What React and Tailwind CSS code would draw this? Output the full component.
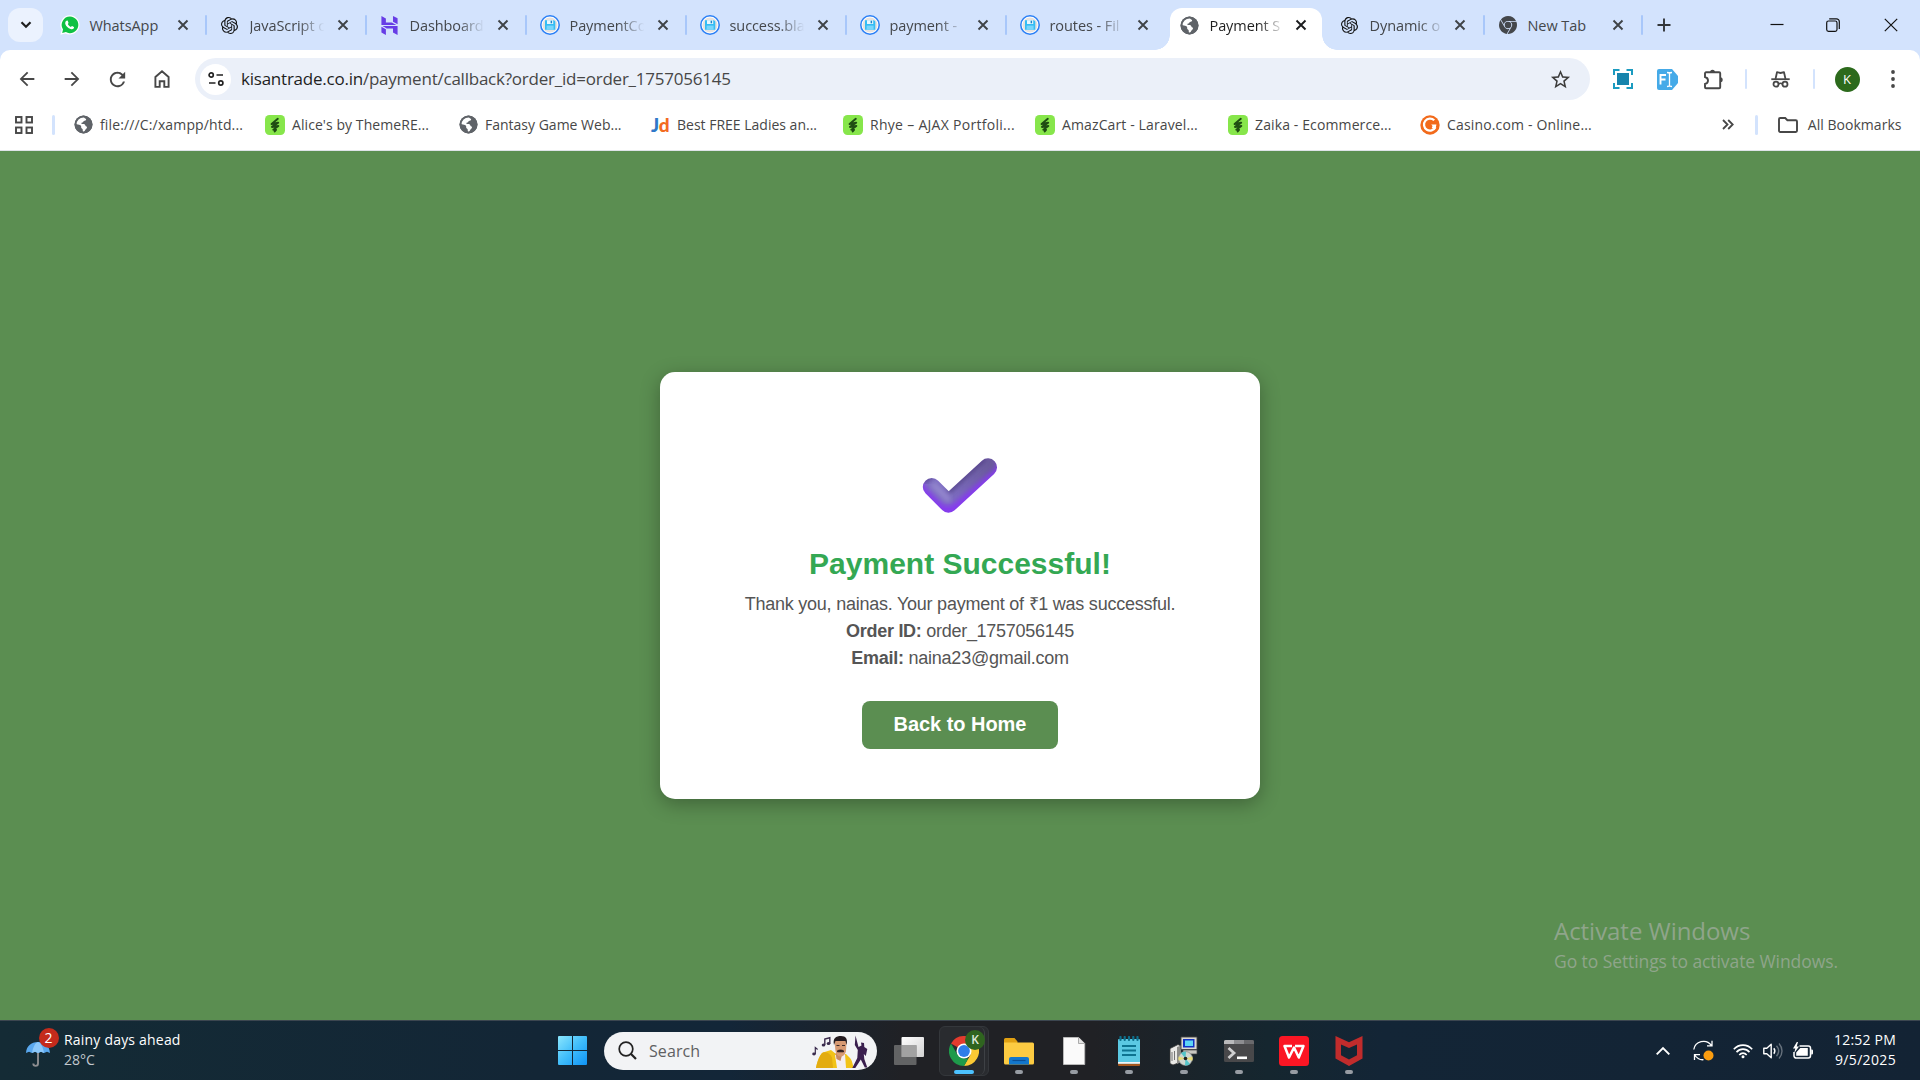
import { SiOpenai, SiHostinger, SiGooglechrome } from "react-icons/si";
import { MdArrowBack, MdArrowForward, MdRefresh, MdStarBorder } from "react-icons/md";

const SEGOE = "font-['Open_Sans','Noto_Sans',sans-serif]";

function WhatsAppIcon() {
  return (
    <svg width="20" height="20" viewBox="0 0 20 20">
      <path d="M10 .3A9.6 9.6 0 0 0 1.7 14.8L.4 19.7l5-1.3A9.6 9.6 0 1 0 10 .3z" fill="#fff" />
      <path d="M10 1.6a8.3 8.3 0 0 0-7 12.8L2.2 18l3.700-.9A8.3 8.3 0 1 0 10 1.6z" fill="#0fc143" />
      <path d="M7.1 5.6c.3 0 .5 0 .7.5l.7 1.6c.1.3-.2.8-.7 1.3.7 1.4 1.7 2.3 3.2 3 .4-.5.8-1.1 1.1-1l1.8.9c.3.2.1 1.2-.3 1.7-.7.8-1.8.9-3 .5-2.600-.9-4.500-2.700-5.300-5-.3-1.200.2-3.500 1.800-3.500z" fill="#fff" />
    </svg>
  );
}

function DiskIcon() {
  return (
    <svg width="20" height="20" viewBox="0 0 20 20">
      <circle cx="10" cy="10" r="9.200" fill="#fff" stroke="#2a7ff5" strokeWidth="1.500" />
      <circle cx="10" cy="10" r="7.600" fill="#e6e2de" />
      <path d="M5 5.200h9l1.300 1.200v8.400H5z" fill="#35bdf4" />
      <rect x="7" y="5.200" width="6.200" height="3.800" fill="#e8f7ff" />
      <rect x="10.600" y="5.700" width="1.500" height="2.600" fill="#1e86c9" />
      <rect x="6.600" y="10.600" width="7" height="4.200" fill="#7bd6fa" />
    </svg>
  );
}

function GlobeIcon() {
  return (
    <svg width="19" height="19" viewBox="0 0 19 19">
      <circle cx="9.500" cy="9.500" r="9" fill="#5f6368" />
      <path d="M9.300 2c1.800.2 1 1.600 2.500 1.800.9.600-.1 1.800-1.100 1.900-1.300.1-1.300 1.600-2.300 1.700-1.500.1-1.400 1.500-.2 1.600 1.800-.1 3 .2 3.300 1.700.3.900 1.600.5 1.600 1.400-.3 1.800-1.800 2.400-2.400 3.800-.3.900-1.200 1.300-1.700 1.100-.5-.700.1-2-.5-2.900-.9-.800-1.600-1.300-1.300-2.400.2-1.400-1.500-2.200-3.300-2.300L2 9c.2-4 3.300-7 7.300-7z" fill="#fff" />
      <circle cx="9.500" cy="9.500" r="8" fill="none" stroke="#5f6368" strokeWidth="2" />
    </svg>
  );
}

function EnvatoIcon() {
  return (
    <svg width="20" height="20" viewBox="0 0 20 20">
      <rect width="20" height="20" rx="4.500" fill="#87e64b" />
      <path d="M12.800 3.800 6.600 9l6.600-1.300-6.200 4.200 6.300-.9-5 3.700 2.700.1-1.300 1.700" fill="none" stroke="#1f4d13" strokeWidth="2" strokeLinejoin="round" strokeLinecap="round" />
    </svg>
  );
}

function CasinoIcon() {
  return (
    <svg width="20" height="20" viewBox="0 0 20 20">
      <circle cx="10" cy="10" r="9.700" fill="#f26a1b" />
      <path d="M14.200 5.300a6 6 0 1 0 1.200 6.900" fill="none" stroke="#fff" strokeWidth="2.300" />
      <path d="M16.400 9.600h-5.200l1.300 1.300-.8 2.300h4z" fill="#fff" />
    </svg>
  );
}

function JdIcon() {
  return (
    <span className="flex w-[19px] justify-center font-['Lato','Open_Sans',sans-serif] text-[19px] leading-5 font-black tracking-[-0.5px]">
      <span className="text-[#2f79c9]">J</span>
      <span className="text-[#f36b21]">d</span>
    </span>
  );
}

function CloseX({ dark }) {
  return (
    <svg width="12" height="12" viewBox="0 0 12 12" className={dark ? "text-[#1b1c1e]" : "text-[#3f4347]"}>
      <path d="M1.500 1.500l9 9M10.500 1.500l-9 9" stroke="currentColor" strokeWidth="1.900" />
    </svg>
  );
}

function Divider({ className }) {
  return <div className={"h-5 w-[2.500px] shrink-0 rounded-full " + className} />;
}

const tabs = [
  { icon: <WhatsAppIcon />, title: "WhatsApp" },
  { icon: <SiOpenai size={17} color="#111" />, title: "JavaScript c", fade: true },
  { icon: <SiHostinger size={19} color="#673de6" />, title: "Dashboard", fade: true },
  { icon: <DiskIcon />, title: "PaymentCo", fade: true },
  { icon: <DiskIcon />, title: "success.bla", fade: true },
  { icon: <DiskIcon />, title: "payment -", fade: true },
  { icon: <DiskIcon />, title: "routes - Fil", fade: true, last: true },
  { icon: <GlobeIcon />, title: "Payment S", fade: true, active: true },
  { icon: <SiOpenai size={17} color="#111" />, title: "Dynamic o", fade: true, narrow: true },
  { icon: <SiGooglechrome size={18} color="#44474b" />, title: "New Tab", narrow: true },
];

function Tab({ icon, title, fade, active, last, narrow }) {
  return (
    <div className={"relative flex h-[50px] shrink-0 items-center " + (narrow ? "w-[158px]" : "w-40")}>
      {active && (
        <>
          <div className="absolute top-2 right-[5px] bottom-0 left-[3px] rounded-t-xl bg-white" />
          <div className="absolute bottom-0 -left-[12px] h-[15px] w-[15px] bg-[radial-gradient(circle_at_0_0,#d3e3fd_14.500px,#fff_15px)]" />
          <div className="absolute -right-[10px] bottom-0 h-[15px] w-[15px] bg-[radial-gradient(circle_at_100%_0,#d3e3fd_14.500px,#fff_15px)]" />
        </>
      )}
      <div className="relative ml-[12.500px] flex w-5 justify-center">{icon}</div>
      <div
        className={
          "relative ml-2.5 w-[76px] pt-px text-[14.500px] tracking-[-0.080px] whitespace-nowrap " +
          (active ? "text-[#1f1f1f] " : "text-[#44474b] ") +
          (fade ? "[mask-image:linear-gradient(to_right,#000_64%,transparent_98%)]" : "")
        }
      >
        {title}
      </div>
      <div className={"relative " + (narrow ? "ml-[8.500px]" : active ? "ml-[9.500px]" : "ml-[11px]")}>
        <CloseX dark={active} />
      </div>
      {!active && !last && <Divider className="ml-auto bg-[#a8c7fa]" />}
    </div>
  );
}

function TabStrip() {
  return (
    <div className="flex h-[50px] items-center bg-[#d3e3fd]">
      <div className="mr-1 ml-2 flex h-[34px] w-[35px] shrink-0 items-center justify-center rounded-xl bg-[#ebf2fe]">
        <svg width="12" height="8" viewBox="0 0 12 8">
          <path d="M1.500 1.200 6 5.700l4.500-4.500" fill="none" stroke="#1f1f1f" strokeWidth="2.200" />
        </svg>
      </div>
      {tabs.map((t) => (
        <Tab key={t.title} {...t} />
      ))}
      <svg width="14" height="14" viewBox="0 0 14 14" className="ml-[14px]">
        <path d="M7 .5v13M.5 7h13" stroke="#33363a" strokeWidth="1.900" />
      </svg>
      <div className="mr-[22px] ml-auto flex items-center">
        <svg width="14" height="14" viewBox="0 0 14 14" className="mr-[42px]">
          <path d="M.5 6.500h13" stroke="#111" strokeWidth="1.200" />
        </svg>
        <svg width="14" height="14" viewBox="0 0 14 14" className="mr-[44px]">
          <rect x=".7" y="3" width="10.300" height="10.300" rx="1.800" fill="none" stroke="#111" strokeWidth="1.200" />
          <path d="M3.200.8h7.300a2.800 2.800 0 0 1 2.800 2.800V11" fill="none" stroke="#111" strokeWidth="1.200" />
        </svg>
        <svg width="14" height="14" viewBox="0 0 14 14">
          <path d="M.8.8l12.400 12.400M13.200.8.8 13.200" stroke="#111" strokeWidth="1.200" />
        </svg>
      </div>
    </div>
  );
}

function Toolbar() {
  return (
    <div className="bg-[#d3e3fd]">
      <div className="flex h-[50px] items-center rounded-t-[10px] bg-white pt-2 text-[#474747]">
        <MdArrowBack size={22} className="ml-4" />
        <MdArrowForward size={22} className="ml-[23px]" />
        <MdRefresh size={23} className="ml-[23px]" />
        <svg width="16" height="18" viewBox="0 0 16 18" className="ml-[25px]">
          <path d="M1.400 7v9.900h4.300v-5.700h4.600v5.700h4.300V7L8 1.300z" fill="none" stroke="#474747" strokeWidth="1.900" />
        </svg>
        <div className="ml-[25px] flex h-[42px] w-[1395px] items-center rounded-full bg-[#ebf0f9]">
          <div className="ml-[5px] flex h-[31px] w-[31px] items-center justify-center rounded-full bg-white">
            <svg width="16" height="16" viewBox="0 0 16 16" fill="none" stroke="#222" strokeWidth="1.700">
              <circle cx="3.200" cy="4" r="2.100" />
              <path d="M8.500 4H15M1 12h6.500" />
              <circle cx="12.800" cy="12" r="2.100" />
            </svg>
          </div>
          <div className="ml-[10px] text-[17px] tracking-[-0.230px] text-[#474747]">
            <span className="text-[#1f1f1f]">kisantrade.co.in</span>/payment/callback?order_id=order_1757056145
          </div>
          <MdStarBorder size={23} className="mr-[18px] ml-auto text-[#3c3c3c]" />
        </div>
        <svg width="20" height="20" viewBox="0 0 20 20" className="ml-[22.500px]">
          <path d="M1 6V1h5.500M13.500 1H19v5M19 14v5h-5.500M6.500 19H1v-5" fill="none" stroke="#1b9bc0" strokeWidth="2" />
          <rect x="4" y="4" width="12" height="12" fill="#1684ad" />
        </svg>
        <svg width="21" height="21" viewBox="0 0 21 21" className="ml-[24.500px]">
          <path d="M2 0h13l6 7v7l-6 7H2a2 2 0 0 1-2-2V2a2 2 0 0 1 2-2z" fill="#45aae8" />
          <path d="M3.500 15.500V6H9M3.500 10.500h5" fill="none" stroke="#fff" strokeWidth="1.900" />
          <path d="M10 3.500c1.500 0 2.300.4 2.500 1 .2-.6 1-1 2.500-1M10 17.500c1.500 0 2.300-.4 2.500-1 .2.600 1 1 2.500 1M12.500 4.500v12" fill="none" stroke="#fff" strokeWidth="1.300" />
        </svg>
        <svg width="21" height="21" viewBox="0 0 21 21" className="ml-[25px]">
          <path d="M2 4.300a1 1 0 0 1 1-1h13.200a1 1 0 0 1 1 1v14a1 1 0 0 1-1 1H3a1 1 0 0 1-1-1V15c4-.8 4-6 0-7z" fill="none" stroke="#474747" strokeWidth="1.900" />
          <path d="M7 3.300a2.500 2.500 0 0 1 5 0zM17.200 8.300a2.500 2.500 0 0 1 0 5z" fill="#474747" />
        </svg>
        <Divider className="ml-[20.500px] bg-[#d3e3fd]" />
        <svg width="19" height="18" viewBox="0 0 19 18" className="ml-[24px]" fill="none" stroke="#474747" strokeWidth="1.800">
          <path d="M.3 9.200h18.400" />
          <path d="M4.500 9 6 2.200 9.500 3l3.500-.8L14.500 9" strokeLinejoin="round" />
          <circle cx="5" cy="14.200" r="2.500" />
          <circle cx="14" cy="14.200" r="2.500" />
          <path d="M7.500 14c1-.9 3-.9 4 0" />
        </svg>
        <Divider className="ml-[22.500px] bg-[#d3e3fd]" />
        <div className="ml-[19.500px] flex h-[25px] w-[25px] items-center justify-center rounded-full bg-[#2c6a1c] text-[13px] leading-none text-white">
          K
        </div>
        <svg width="4" height="18" viewBox="0 0 4 18" className="ml-[31px]" fill="#474747">
          <circle cx="2" cy="2" r="1.900" />
          <circle cx="2" cy="9" r="1.900" />
          <circle cx="2" cy="16" r="1.900" />
        </svg>
      </div>
    </div>
  );
}

const bookmarks = [
  { icon: <GlobeIcon />, label: "file:///C:/xampp/htd...", cls: "w-[192px] tracking-[0.140px]" },
  { icon: <EnvatoIcon />, label: "Alice's by ThemeRE...", cls: "w-[193px] tracking-[0.070px]" },
  { icon: <GlobeIcon />, label: "Fantasy Game Web...", cls: "w-[192px]" },
  { icon: <JdIcon />, label: "Best FREE Ladies an...", cls: "w-[193px]" },
  { icon: <EnvatoIcon />, label: "Rhye – AJAX Portfoli...", cls: "w-[192px] tracking-[0.290px]" },
  { icon: <EnvatoIcon />, label: "AmazCart - Laravel...", cls: "w-[193px] tracking-[0.120px]" },
  { icon: <EnvatoIcon />, label: "Zaika - Ecommerce...", cls: "w-[192px] tracking-[0.120px]" },
  { icon: <CasinoIcon />, label: "Casino.com - Online...", cls: "w-[200px] tracking-[0.160px]" },
];

function BookmarksBar() {
  return (
    <div className="flex h-[51px] items-center border-b border-[#dfe3e8] bg-white pb-px text-[14px] whitespace-nowrap text-[#474747]">
      <svg width="18" height="18" viewBox="0 0 18 18" className="ml-[15px]" fill="none" stroke="#474747" strokeWidth="1.900">
        <rect x="1" y="1" width="5.500" height="5.500" />
        <rect x="11.500" y="1" width="5.500" height="5.500" />
        <rect x="1" y="11.500" width="5.500" height="5.500" />
        <rect x="11.500" y="11.500" width="5.500" height="5.500" />
      </svg>
      <Divider className="mr-[18.500px] ml-[19px] bg-[#d3e3fd]" />
      {bookmarks.map((b) => (
        <div key={b.label} className={"flex shrink-0 items-center " + b.cls}>
          <span className="mr-[7px] flex w-5 shrink-0 justify-center">{b.icon}</span>
          {b.label}
        </div>
      ))}
      <svg width="12" height="11" viewBox="0 0 12 11" className="mr-[21.500px] ml-auto" fill="none" stroke="#474747" strokeWidth="1.800">
        <path d="M1 1l4.500 4.500L1 10M6.200 1l4.500 4.500L6.200 10" />
      </svg>
      <Divider className="bg-[#d3e3fd]" />
      <svg width="20" height="16" viewBox="0 0 20 16" className="mr-[10px] ml-[20px]">
        <path d="M1 2.200A1.200 1.200 0 0 1 2.200 1h5l2.200 2.200h8.400A1.200 1.200 0 0 1 19 4.400v9.400a1.200 1.200 0 0 1-1.200 1.200H2.200A1.200 1.200 0 0 1 1 13.800z" fill="none" stroke="#474747" strokeWidth="1.900" />
      </svg>
      <span className="mr-[18.500px] tracking-[0.030px]">All Bookmarks</span>
    </div>
  );
}

function CheckMark() {
  return (
    <svg width="75" height="56" viewBox="0 0 75 56" className="mt-[86px] overflow-visible">
      <defs>
        <mask id="tick">
          <path d="M8.800 29 25.500 45.700 65 9.300" fill="none" stroke="#fff" strokeWidth="18" strokeLinecap="round" strokeLinejoin="round" />
        </mask>
        <linearGradient id="arm" x1="0" y1="0" x2="1" y2="0">
          <stop offset="0" stopColor="#7f70c2" />
          <stop offset=".35" stopColor="#7c6cc0" />
          <stop offset="1" stopColor="#6a5a9c" />
        </linearGradient>
        <filter id="soft" x="-30%" y="-30%" width="160%" height="160%">
          <feGaussianBlur stdDeviation="2.400" />
        </filter>
      </defs>
      <g mask="url(#tick)">
        <rect x="-2" y="-2" width="80" height="60" fill="#853cec" />
        <path d="M9 24 25 39 66 5" fill="none" stroke="url(#arm)" strokeWidth="17" strokeLinecap="round" strokeLinejoin="round" filter="url(#soft)" />
        <path d="M25 34 62 0" fill="none" stroke="#4f4080" strokeWidth="4" filter="url(#soft)" />
        <path d="M11 27 25 41" fill="none" stroke="#988bd0" strokeWidth="5" strokeLinecap="round" filter="url(#soft)" />
        <path d="M0 24 9 18" fill="none" stroke="#55438c" strokeWidth="4" filter="url(#soft)" />
        <path d="M74 3v13" fill="none" stroke="#55438c" strokeWidth="5" filter="url(#soft)" />
      </g>
    </svg>
  );
}

function PaymentPage() {
  return (
    <main className="relative flex h-[869px] items-center justify-center bg-[#5b8e51] font-['Liberation_Sans',Arial,sans-serif]">
      <section className="flex h-[427px] w-[600px] flex-col items-center rounded-[15px] bg-white shadow-[0_5px_20px_rgba(0,0,0,0.3)]">
        <CheckMark />
        <h1 className="mt-8 text-[30px] leading-9 font-bold text-[#34a853]">Payment Successful!</h1>
        <div className="mt-[9px] text-center text-[18px] leading-[27px] text-[#555]">
          <p className="tracking-[-0.240px]">Thank you, nainas. Your payment of ₹1 was successful.</p>
          <p className="tracking-[-0.280px]">
            <strong>Order ID:</strong> order_1757056145
          </p>
          <p className="tracking-[-0.240px]">
            <strong>Email:</strong> naina23@gmail.com
          </p>
        </div>
        <button className="mt-[29px] h-12 w-[196px] rounded-lg bg-[#5b8e51] pb-0.5 text-[20px] font-bold tracking-[-0.040px] text-white">
          Back to Home
        </button>
      </section>
      <div className={"absolute top-[763px] left-[1554px] whitespace-nowrap text-[#8fa58b] " + SEGOE}>
        <div className="text-[24px] leading-[33.500px] tracking-[-0.040px]">Activate Windows</div>
        <div className="text-[17.500px] leading-[26px] tracking-[-0.080px]">Go to Settings to activate Windows.</div>
      </div>
    </main>
  );
}

function ChromeLogo() {
  return (
    <svg width="30" height="30" viewBox="0 0 30 30">
      <path d="M15 15 2 7.500A15 15 0 0 1 28 7.500H15z" fill="#e33b2e" />
      <path d="M15 7.500h13A15 15 0 0 1 15 30l6.500-11.200z" fill="#fcc934" />
      <path d="M2 7.500 8.500 18.800 15 22.500h4.300L15 30A15 15 0 0 1 2 7.500z" fill="#1e9a4a" />
      <circle cx="15" cy="15" r="7.500" fill="#fff" />
      <circle cx="15" cy="15" r="5.900" fill="#2f7de9" />
    </svg>
  );
}

function SearchArt() {
  return (
    <svg width="62" height="34" viewBox="0 0 62 34">
      <g fill="#3a2b4d" stroke="#3a2b4d" transform="translate(1 0)">
        <ellipse cx="3" cy="19" rx="1.800" ry="1.400" stroke="none" />
        <path d="M4.300 19V12.500l2.300 2" fill="none" strokeWidth="1.200" />
        <ellipse cx="12.500" cy="10" rx="1.800" ry="1.500" stroke="none" />
        <ellipse cx="17.500" cy="8.500" rx="1.800" ry="1.500" stroke="none" />
        <path d="M13.800 10V4l5-1.300v6" fill="none" strokeWidth="1.400" />
      </g>
      <path d="M6 33c1-6 4-14 7-15.500l8-2.500 5 4h10l4 4c2 2 3 7 3.500 10z" fill="#f2c318" />
      <path d="M6 33c1-6 4-14 7-15.500 4-1 7 1 9 5l1 10.500z" fill="#e3ac10" />
      <path d="M25 20l10-1 1 14h-9z" fill="#f4eef0" />
      <path d="M25.500 18h7l-2 8-4-2z" fill="#c98961" />
      <path d="M24.500 7c0-3 12-3 12 0l-.5 9c-1 4-3 5.500-5.500 5.500S26 19.500 25.500 16z" fill="#d79a73" />
      <path d="M24 10c-1.500-7 2-9 7-9s7 3 5.500 9l-1-4h-10z" fill="#241b20" />
      <path d="M27.500 15.800c1.500-1 4.500-1 6 0v1h-6zM26.500 10.500h3M32 10.500h3" stroke="#2a1c1e" fill="#2a1c1e" strokeWidth=".9" />
      <path d="M45.500.5l3 11.500 3-1.500-.5-3 3 .5.300 4 3 2-1.500 7-2-2 .5 5 3 8.500h-2.500l-4-8-5.500 8.500h-3l5-10 .5-8-3-5z" fill="#3a1f4e" />
    </svg>
  );
}

const apps = [
  {
    name: "files",
    icon: (
      <svg width="30" height="30" viewBox="0 0 30 30">
        <path d="M0 3.500A1.500 1.500 0 0 1 1.500 2h9l3 3.500V9H0z" fill="#e0a012" />
        <path d="M0 6.500h28.500A1.500 1.500 0 0 1 30 8v19a1.500 1.500 0 0 1-1.500 1.500h-27A1.500 1.500 0 0 1 0 27z" fill="#fccb42" />
        <path d="M5 28.500V23a2 2 0 0 1 2-2h16a2 2 0 0 1 2 2v5.500z" fill="#1377cc" />
        <path d="M8.500 24.500h13" stroke="#0b4f96" strokeWidth="1.200" />
      </svg>
    ),
  },
  {
    name: "document",
    icon: (
      <svg width="30" height="30" viewBox="0 0 30 30">
        <path d="M4.500 1.500h15.200l6 6V28.500H4.500z" fill="#fafafa" stroke="#b9b9b9" />
        <path d="M19.500 1.500v6h6" fill="#e4e4e4" stroke="#999" strokeWidth=".8" />
      </svg>
    ),
  },
  {
    name: "notepad",
    icon: (
      <svg width="30" height="30" viewBox="0 0 30 30">
        <rect x="4" y="4" width="22" height="26" rx="1" fill="#a4571d" />
        <rect x="4" y="3" width="22" height="24.500" rx="1" fill="#5bc9e3" />
        <rect x="4" y="26" width="22" height="1.700" fill="#f2f4f5" />
        <path d="M8 10h14M8 14.500h14M8 19h14" stroke="#0d7390" strokeWidth="1.900" />
        <path d="M6.500 1v3M10.700 1v3M15 1v3M19.300 1v3M23.500 1v3" stroke="#0d6f8c" strokeWidth="2.200" strokeLinecap="round" />
      </svg>
    ),
  },
  {
    name: "installer",
    icon: (
      <svg width="30" height="30" viewBox="0 0 30 30">
        <path d="M1 12.500 9 8.500l3 1.500v16l-8 3-3-1.500z" fill="#e9e9e6" stroke="#333" strokeWidth=".8" />
        <path d="M8 11v17l4-2V9.500z" fill="#8b8b88" />
        <path d="M3 16v9M5.500 15v9" stroke="#555" strokeWidth=".8" />
        <path d="M12 1h16v12.500H12z" fill="#dcdad2" stroke="#444" strokeWidth=".9" />
        <path d="M14 3h11.500v8.500H14z" fill="#1034c4" />
        <path d="M16 4.500h8v5.500h-8z" fill="#5ed6f6" />
        <path d="M14 14h14v4H14z" fill="#c9c7c0" stroke="#444" strokeWidth=".7" />
        <circle cx="16.500" cy="22.500" r="7" fill="#cfd6cf" stroke="#777" strokeWidth=".6" />
        <path d="M16.500 22.500 12 17a7 7 0 0 1 5-1.500zM16.500 22.500l4.500 5.500a7 7 0 0 1-5 1.500z" fill="#53c4c9" />
        <path d="M16.500 22.500l6.800-2a7 7 0 0 1 0 4.300zM16.500 22.500l-6.800 2a7 7 0 0 1 0-4z" fill="#e8dc76" />
        <circle cx="16.500" cy="22.500" r="1.800" fill="#222" />
      </svg>
    ),
  },
  {
    name: "terminal",
    icon: (
      <svg width="30" height="30" viewBox="0 0 30 30">
        <path d="M0 5.500A1.500 1.500 0 0 1 1.500 4h27A1.500 1.500 0 0 1 30 5.500V24.500A1.500 1.500 0 0 1 28.500 26h-27A1.500 1.500 0 0 1 0 24.500z" fill="#48484a" />
        <path d="M0 8V5.500A1.500 1.500 0 0 1 1.500 4H10v4z" fill="#b9b9bb" />
        <path d="M10 4h10v4H10z" fill="#8d8d90" />
        <path d="M20 4h8.500A1.500 1.500 0 0 1 30 5.500V8H20z" fill="#69696c" />
        <path d="M4.500 12l5.500 5-5.500 5" fill="none" stroke="#cfcfd0" strokeWidth="2.800" />
        <path d="M13 21.800h10" stroke="#fff" strokeWidth="2.600" />
      </svg>
    ),
  },
  {
    name: "office",
    icon: (
      <svg width="30" height="30" viewBox="0 0 30 30">
        <rect width="30" height="30" rx="3.500" fill="#fb1624" />
        <path d="M13 10H5.500L10 21.500 15 11.500 19.800 21.500 24.500 10H16" fill="none" stroke="#fff" strokeWidth="2.500" strokeLinejoin="round" />
      </svg>
    ),
  },
  {
    name: "shield",
    icon: (
      <svg width="30" height="30" viewBox="0 0 30 30">
        <path d="M1.500 0 15 6.200 28.500 0v22.500L15 30 1.500 22.500zM7 8.500v10.800l8 4.300 8-4.300V8.500L15 12z" fill="#c12c2c" fillRule="evenodd" />
      </svg>
    ),
  },
];

function Taskbar() {
  return (
    <footer className="flex h-[60px] items-center border-t border-[#3c4650] bg-[linear-gradient(to_right,#142b35_0%,#132636_28%,#132638_38%,#202125_47%,#202125_57%,#15262f_66%,#132536_72%,#132334_100%)] text-[14px] text-white">
      <div className="ml-[26px] flex h-full w-[532px] items-center">
        <div className="relative h-[34px] w-[34px]">
          <svg width="24" height="29" viewBox="0 0 24 29" className="mt-[5px]">
            <path d="M12 13v11.500a2.300 2.300 0 0 1-4.700 0" fill="none" stroke="#8d8d90" strokeWidth="1.900" />
            <path d="M0 14C.5 7 5 3 12 3s11.500 4 12 11l-3-1.200-3 1.200-3-1.200-3 1.200-3-1.200L6 14l-3-1.200z" fill="#5aa8ee" />
            <path d="M6 14C7 8 9 4 12 3c3 1 5 5 6 11l-3-1.200-3 1.200-3-1.200z" fill="#8cc8fa" />
          </svg>
          <span className="absolute -top-1.5 left-[12.500px] flex h-5 w-5 items-center justify-center rounded-full bg-[#c42b1c] text-[14px] leading-none">
            2
          </span>
        </div>
        <div className="ml-1 pb-[2px] leading-5">
          <div className="tracking-[0.200px]">Rainy days ahead</div>
          <div className="text-[#c3c9ce]">28°C</div>
        </div>
      </div>
      <svg width="29" height="29" viewBox="0 0 29 29">
        <defs>
          <linearGradient id="win" x1="0" y1="0" x2="1" y2="1">
            <stop offset="0" stopColor="#8be6fd" />
            <stop offset=".5" stopColor="#40bdfb" />
            <stop offset="1" stopColor="#0f93f5" />
          </linearGradient>
        </defs>
        <path d="M1 0h13v14H0V1a1 1 0 0 1 1-1zM15 0h13a1 1 0 0 1 1 1v13H15zM0 15h14v14H1a1 1 0 0 1-1-1zM15 15h14v13a1 1 0 0 1-1 1H15z" fill="url(#win)" />
      </svg>
      <div className="ml-[17px] flex h-[38px] w-[273px] items-center rounded-full bg-[#f2f3f5]">
        <svg width="19" height="19" viewBox="0 0 19 19" className="ml-[14px]">
          <circle cx="8" cy="8" r="6.800" fill="none" stroke="#222" strokeWidth="1.700" />
          <path d="M12.800 12.800 18 18" stroke="#222" strokeWidth="2.200" />
        </svg>
        <span className="ml-3 text-[16px] tracking-[0.100px] text-[#5f6062]">Search</span>
        <div className="mt-[2px] mr-[5px] ml-auto">
          <SearchArt />
        </div>
      </div>
      <svg width="30" height="28" viewBox="0 0 30 28" className="ml-[17px]">
        <defs>
          <linearGradient id="pane" x1="0" y1="0" x2="1" y2="1">
            <stop offset="0" stopColor="#fff" />
            <stop offset="1" stopColor="#d2d2d2" />
          </linearGradient>
        </defs>
        <rect x="7.500" width="22.500" height="20" rx="1" fill="url(#pane)" />
        <rect y="8" width="22.500" height="20" rx="1" fill="#6f6f70" opacity=".85" />
        <rect x="7.500" y="8" width="15" height="12" fill="#a2a2a2" />
      </svg>
      <div className="relative ml-[15px] flex h-[50px] w-[50px] items-center rounded-md border border-[#34373b] bg-[#292b2f]">
        <div className="flex h-12 w-[45px] items-center justify-center rounded-md border-r border-[#3e4145] pr-1 pl-2">
          <div className="relative">
            <ChromeLogo />
            <span className="absolute -top-[6px] left-[16px] flex h-5 w-5 items-center justify-center rounded-full bg-[#2f641f] text-[12px] leading-none font-semibold text-[#dfe8dc]">
              K
            </span>
          </div>
        </div>
        <div className="absolute bottom-px left-[14px] h-[4px] w-5 rounded-full bg-[#4cc2ff]" />
      </div>
      <div className="ml-[2.500px] flex h-full">
        {apps.map((a) => (
          <div key={a.name} className="relative flex h-full w-[55px] items-center justify-center">
            {a.icon}
            <div className="absolute bottom-[6px] h-1 w-2 rounded-full bg-[#979ca3]" />
          </div>
        ))}
      </div>
      <div className="mr-6 ml-auto flex items-center">
        <svg width="16" height="10" viewBox="0 0 16 10" fill="none" stroke="#fff" strokeWidth="1.900">
          <path d="M1.700 8.300 8 2l6.300 6.300" />
        </svg>
        <svg width="21" height="21" viewBox="0 0 21 21" className="ml-[22px]" fill="none" stroke="#fff" strokeWidth="1.300">
          <path d="M.8 9.500C2 1.500 13 -2 18.500 5.500M19 .8v5h-5" />
          <path d="M1.500 20v-5.300H7M1.800 15c2.500 4 5.500 5 8.700 4.700" />
          <circle cx="15.500" cy="15.500" r="5" fill="#fb9d10" stroke="none" />
        </svg>
        <svg width="20" height="16" viewBox="0 0 20 16" className="ml-[19px]" fill="none" stroke="#fff" strokeWidth="1.600">
          <path d="M.8 6.200c5-5.500 13.400-5.500 18.400 0M3.500 9.100c3.600-4 9.400-4 13 0M6.300 11.900c2-2.400 5.400-2.400 7.400 0" />
          <circle cx="10" cy="13.700" r="1.500" fill="#fff" stroke="none" />
        </svg>
        <svg width="20" height="18" viewBox="0 0 20 18" className="ml-[10px]" fill="none" stroke="#fff" strokeWidth="1.400">
          <path d="M.8 6.200v5.600h3l4.400 4V2.200l-4.400 4z" strokeLinejoin="round" />
          <path d="M10.800 6.200c1.300 1.700 1.300 3.900 0 5.600" />
          <path d="M13.500 3.800c2.700 3.200 2.700 7.200 0 10.400M16 1.500c4 4.500 4 10.500 0 15" stroke="#66717c" />
        </svg>
        <svg width="20" height="18" viewBox="0 0 20 18" className="ml-[10px]">
          <path d="M6.500 4h8.800A2.200 2.200 0 0 1 17.500 6.200v7.600a2.200 2.200 0 0 1-2.200 2.200H3.200A2.200 2.200 0 0 1 1 13.800V10" fill="none" stroke="#fff" strokeWidth="1.500" />
          <path d="M7.300 6h7.500v7.800H3.200v-3.300zM18.200 7.500h.6A1.200 1.200 0 0 1 20 8.700v2.600a1.200 1.200 0 0 1-1.200 1.200h-.6z" fill="#fff" />
          <path d="M3.800 0 0 6.500h2.300L1.300 11 6 4.600H3.700L5 0z" fill="#fff" />
        </svg>
        <div className="ml-[18px] w-[65px] pb-[2px] text-right leading-5">
          <div className="tracking-[0.200px]">12:52 PM</div>
          <div className="tracking-[0.340px]">9/5/2025</div>
        </div>
      </div>
    </footer>
  );
}

export default function App() {
  return (
    <div className={"h-[1080px] w-[1920px] overflow-hidden " + SEGOE}>
      <TabStrip />
      <Toolbar />
      <BookmarksBar />
      <PaymentPage />
      <Taskbar />
    </div>
  );
}
